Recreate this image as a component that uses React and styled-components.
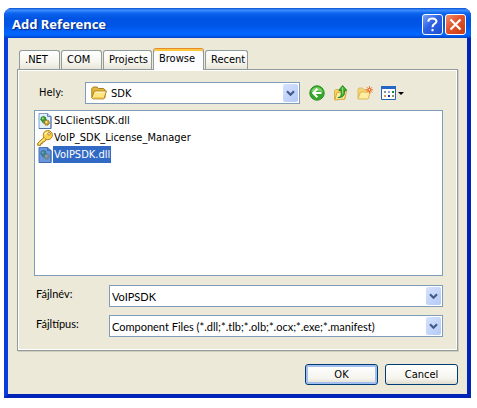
import React, { useState } from "react";
import styled, { createGlobalStyle } from "styled-components";

const tabs = [
  { name: ".NET", width: 41 },
  { name: "COM", width: 41 },
  { name: "Projects", width: 49 },
  { name: "Browse", width: 51 },
  { name: "Recent", width: 43 },
];

const files = [
  { name: "SLClientSDK.dll", type: "dll" },
  { name: "VoIP_SDK_License_Manager", type: "key" },
  { name: "VoIPSDK.dll", type: "dll" },
];

const FolderIcon = () => (
  <svg width="16" height="14" viewBox="0 0 16 14">
    <path d="M.8 11.5V2.5L2.3 1H6l1.5 1.5h5.2L14 4v7.5z" fill="#e3b53a" stroke="#a97f1d" />
    <path d="M2 12.9L.9 11.5 3.4 5h12L13 12.9z" fill="#ffe583" stroke="#b0861f" />
    <path d="M4.5 6.2h9.3" stroke="#fffbd8" />
    <path d="M2.8 11.8h9.6" stroke="#eec041" />
  </svg>
);

const DllIcon = ({ selected }) => (
  <svg width="14" height="16" viewBox="0 0 14 16">
    <path d="M1 .5h8.5l3.5 3v12H1z" fill={selected ? "#6a97db" : "#e3effc"} stroke={selected ? "#4676bd" : "#7f9fc8"} />
    <path d="M13 3.5v12H1" fill="none" stroke={selected ? "#3c69ad" : "#4f729f"} />
    <path d="M9.5.5v3H13" fill={selected ? "#4f7fc9" : "#b8d0ee"} stroke={selected ? "#3d6cb4" : "#5f86bb"} />
    <circle cx="5.4" cy="6" r="2.6" fill={selected ? "#3b8291" : "#35a035"} stroke={selected ? "#34688f" : "#1d6f2b"} strokeDasharray="1.6 .6" />
    <circle cx="4.8" cy="5.4" r="1" fill={selected ? "#75a7b5" : "#a4df8c"} />
    <circle cx="8.7" cy="9.6" r="2.6" fill={selected ? "#788e94" : "#d0a531"} stroke={selected ? "#5c7a98" : "#80641c"} strokeDasharray="1.6 .6" />
    <circle cx="8.3" cy="9.1" r="1" fill={selected ? "#9aa9a5" : "#fff0a8"} />
    <path d="M6.5 9.8q-1.5.8-2-1" fill="none" stroke={selected ? "#346d84" : "#277f2f"} />
  </svg>
);

const KeyIcon = () => (
  <svg width="16" height="16" viewBox="0 0 16 16">
    <path d="M7.3 7L.7 13.1v2.3h2.9v-1.6h1.6v-1.7h1.7L9.8 9.5z" fill="#f8cf45" stroke="#a07015" strokeWidth=".9" />
    <circle cx="10.8" cy="5.1" r="4.6" fill="#fad34c" stroke="#a8781c" strokeWidth=".9" />
    <path d="M7.8 4.8a3.2 3.2 0 0 1 3-2.4" fill="none" stroke="#fff6bb" strokeWidth="1.2" />
    <circle cx="12.1" cy="3.8" r="1.3" fill="#fff" stroke="#a07015" strokeWidth=".8" />
    <path d="M1.8 13.8l6-5.4" stroke="#fff2a0" />
  </svg>
);

const BackIcon = () => (
  <svg width="16" height="16" viewBox="0 0 16 16">
    <circle cx="8" cy="8" r="7.2" fill="#35a82c" stroke="#2b8c26" />
    <path d="M2.2 7a5.9 5.9 0 0 1 11.6 0q-5.8-2-11.6 0" fill="#7ccf66" />
    <path d="M8.4 3.8L4.2 8l4.2 4.2M4.8 8h7.7" fill="none" stroke="#fff" strokeWidth="2" />
  </svg>
);

const UpIcon = () => (
  <svg width="16" height="16" viewBox="0 0 16 16">
    <path d="M1.5 14V5.5l1-1h3l1 1H12V14z" fill="#f3d469" stroke="#d9b04a" />
    <path d="M1.8 15L4 7.5 13.5 6.5 11.5 14z" fill="#ffed9c" stroke="#d4a83c" />
    <path d="M4.8 12.6q3.8-.5 3.4-4.1V5.3H5.8L9.6.6l4.2 4.7h-2.4v3.4q-.6 4-6.6 3.9z" fill="#42b637" stroke="#1d7b20" strokeWidth=".9" />
    <path d="M9.6 2.3v6.2" stroke="#94de73" />
  </svg>
);

const NewFolderIcon = () => (
  <svg width="16" height="14" viewBox="0 0 16 14">
    <path d="M1 12.5V3l1-1h3.5l1 1.5H11V12.5z" fill="#f3d577" stroke="#e0b95e" />
    <path d="M1 13L3.5 6H13.5L11 13z" fill="#ffeda2" stroke="#dfb957" />
    <path d="M12.5 0v7.6M8.7 3.8h7.3M9.9 1.2l5.2 5.2M15.1 1.2L9.9 6.4" stroke="#f0743a" />
    <circle cx="12.5" cy="3.8" r="1.4" fill="#fff0bd" stroke="#ed541e" />
  </svg>
);

const ViewIcon = () => (
  <svg width="23" height="14" viewBox="0 0 23 14">
    <path d="M.5.5h14v13H.5z" fill="#fff" stroke="#2864b5" />
    <path d="M0 0h15v3H0z" fill="#2467c6" />
    <path d="M3 5h2v2H3z" fill="#8793a8" />
    <path d="M7 5h2v2H7z" fill="#8c9fd1" />
    <path d="M11 5h2v2h-2z" fill="#268438" />
    <path d="M3 9h2v2H3z" fill="#d79169" />
    <path d="M7 9h2v2H7z" fill="#173aa0" />
    <path d="M11 9h2v2h-2z" fill="#9a8968" />
    <path d="M17 6h6l-3 3z" fill="#000" />
  </svg>
);

const Combo = ({ icon, children }) => (
  <ComboBox>
    {icon && <ComboIcon>{icon}</ComboIcon>}
    {children}
    <ComboArrow>
      <svg width="9" height="7" viewBox="0 0 9 7">
        <path d="M1 1.2l3.5 3.5L8 1.2" fill="none" stroke="#425b8c" strokeWidth="2.2" />
      </svg>
    </ComboArrow>
  </ComboBox>
);

const App = () => {
  const [tab, setTab] = useState("Browse");
  const [selected, setSelected] = useState("VoIPSDK.dll");
  const [fileName, setFileName] = useState("VoIPSDK");

  return (
    <>
      <GlobalStyle />
      <Dialog role="dialog" aria-labelledby="title">
        <TitleBar>
          <Title id="title">Add Reference</Title>
          <TitleButton type="button" aria-label="Help">
            <svg width="13" height="15" viewBox="0 0 13 15">
              <path d="M2.5 4.7V3.5Q3 1.5 6.5 1.5T10.5 4.2Q10.5 6 8.2 7.2Q6.5 8.2 6.5 10.2M6.5 12v2.2" fill="none" stroke="#fff" strokeWidth="2" />
            </svg>
          </TitleButton>
          <TitleButton type="button" aria-label="Close" $close>
            <svg width="13" height="13" viewBox="0 0 13 13">
              <path d="M1.5 1.5l10 10M11.5 1.5l-10 10" stroke="#fff" strokeWidth="2.2" />
            </svg>
          </TitleButton>
        </TitleBar>
        <Content>
          <Tabs role="tablist">
            {tabs.map((t) => (
              <Tab
                key={t.name}
                type="button"
                role="tab"
                aria-selected={tab === t.name}
                $active={tab === t.name}
                $width={t.width}
                onClick={() => setTab(t.name)}
              >
                {t.name}
              </Tab>
            ))}
          </Tabs>
          <Panel role="tabpanel">
            <LookIn>
              <Label htmlFor="folder">Hely:</Label>
              <Combo icon={<FolderIcon />}>
                <Select id="folder" $icon>
                  <option>SDK</option>
                </Select>
              </Combo>
              <Tools>
                <ToolButton type="button" aria-label="Back"><BackIcon /></ToolButton>
                <ToolButton type="button" aria-label="Up one level"><UpIcon /></ToolButton>
                <ToolButton type="button" aria-label="New folder"><NewFolderIcon /></ToolButton>
                <ToolButton type="button" aria-label="Views"><ViewIcon /></ToolButton>
              </Tools>
            </LookIn>
            <FileList>
              {files.map((f) => (
                <FileRow key={f.name} type="button" onClick={() => setSelected(f.name)}>
                  <FileIcon>
                    {f.type === "key" ? <KeyIcon /> : <DllIcon selected={selected === f.name} />}
                  </FileIcon>
                  <FileName $selected={selected === f.name}>{f.name}</FileName>
                </FileRow>
              ))}
            </FileList>
            <Fields>
              <Label htmlFor="filename">Fájlnév:</Label>
              <Combo>
                <Input id="filename" value={fileName} onChange={(e) => setFileName(e.target.value)} />
              </Combo>
              <Label htmlFor="filetype">Fájltípus:</Label>
              <Combo>
                <Select id="filetype">
                  <option>Component Files (*.dll;*.tlb;*.olb;*.ocx;*.exe;*.manifest)</option>
                </Select>
              </Combo>
            </Fields>
          </Panel>
          <Buttons>
            <Button type="button" $primary>OK</Button>
            <Button type="button">Cancel</Button>
          </Buttons>
        </Content>
      </Dialog>
    </>
  );
};
export default App;

const GlobalStyle = createGlobalStyle`
  * {
    box-sizing: border-box;
  }
  body {
    margin: 0;
    background-color: #ffffff;
  }
  body, button, input, select {
    font-family: "DejaVu Sans Condensed", "DejaVu Sans", sans-serif;
    font-size: 11px;
    color: #000000;
  }
  svg {
    display: block;
    flex: none;
  }
`;
const Dialog = styled.div`
  margin: 8px 6px 10px 4px;
  border: 4px solid #0a3fd6;
  border-color: #1250e6 #0024b8 #0024b8 #0b3ddb;
  border-top: 0;
  border-radius: 8px 8px 0 0;
  background-color: #0b4fe2;
`;
const TitleBar = styled.div`
  display: flex;
  align-items: center;
  gap: 2px;
  height: 30px;
  margin: 0 -4px;
  padding: 2px 5px 0 8px;
  border-radius: 8px 8px 0 0;
  background: linear-gradient(
    #0a50d0 0%,
    #3c90ff 7%,
    #0d62ee 18%,
    #0054e3 35%,
    #0056e8 60%,
    #0366ff 85%,
    #0260f5 92%,
    #003fc4 100%
  );
`;
const Title = styled.div`
  flex: 1;
  color: #ffffff;
  font-family: "Noto Sans", "Open Sans", sans-serif;
  font-size: 13px;
  font-weight: bold;
  text-shadow: 1px 1px 1px #0a2a80;
`;
const TitleButton = styled.button`
  display: flex;
  align-items: center;
  justify-content: center;
  width: 21px;
  height: 21px;
  padding: 0;
  border: 1px solid #ffffff;
  border-radius: 3px;
  background: ${(p) =>
    p.$close
      ? "linear-gradient(135deg, #f0906c, #e2532c 45%, #c83c12)"
      : "linear-gradient(135deg, #7ba4f4, #2e62e4 45%, #1d4fd0)"};
`;
const Content = styled.div`
  padding: 10px 9px 9px;
  background-color: #ece9d8;
`;
const Tabs = styled.div`
  display: flex;
  align-items: flex-end;
  gap: 1px;
  height: 21px;
  padding-left: 2px;
`;
const Tab = styled.button`
  position: relative;
  width: ${(p) => p.$width}px;
  height: ${(p) => (p.$active ? 22 : 19)}px;
  margin-bottom: ${(p) => (p.$active ? -1 : 0)}px;
  padding: 0 0 ${(p) => (p.$active ? 2 : 0)}px 5px;
  border: 1px solid #919b9c;
  border-top-color: ${(p) => (p.$active ? "#e68b2c" : "#919b9c")};
  border-bottom: 0;
  border-radius: 3px 3px 0 0;
  background: ${(p) => (p.$active ? "#fcfcfe" : "linear-gradient(#ffffff, #f6f5ee 60%, #e8e6da)")};
  box-shadow: ${(p) => (p.$active ? "inset 0 2px 0 #ffc73c" : "none")};
  line-height: 16px;
  text-align: left;
  white-space: nowrap;
`;
const Panel = styled.div`
  padding: 12px 14px 13px 16px;
  border: 1px solid #919b9c;
  box-shadow: inset 0 0 0 1px #ffffff, 1px 1px 0 #d0cebf;
`;
const LookIn = styled.div`
  display: grid;
  grid-template-columns: 46px 1fr auto;
  align-items: center;
  padding-left: 5px;
`;
const Label = styled.label`
  line-height: 18px;
`;
const ComboBox = styled.div`
  position: relative;
  height: 22px;
  border: 1px solid #7f9db9;
  background-color: #ffffff;
`;
const ComboIcon = styled.span`
  position: absolute;
  left: 5px;
  top: 3px;
  pointer-events: none;
`;
const ComboArrow = styled.span`
  position: absolute;
  top: 1px;
  right: 1px;
  bottom: 1px;
  display: flex;
  align-items: center;
  justify-content: center;
  width: 15px;
  border-radius: 2px;
  background: linear-gradient(135deg, #d6e2fd, #b4c9f8);
  pointer-events: none;
`;
const Select = styled.select`
  display: block;
  width: 100%;
  height: 20px;
  padding: 0 18px 0 ${(p) => (p.$icon ? 25 : 2)}px;
  border: 0;
  outline: 0;
  appearance: none;
  background: transparent;
`;
const Input = styled.input`
  display: block;
  width: 100%;
  height: 20px;
  padding: 0 18px 0 2px;
  border: 0;
  outline: 0;
  background: transparent;
`;
const Tools = styled.div`
  display: flex;
  align-items: center;
  gap: 8px;
  padding: 0 39px 0 9px;
`;
const ToolButton = styled.button`
  padding: 0;
  border: 0;
  background: transparent;
`;
const FileList = styled.div`
  display: flex;
  flex-direction: column;
  height: 166px;
  margin: 6px 0 9px;
  padding: 1px 2px;
  border: 1px solid #7f9db9;
  background-color: #ffffff;
`;
const FileRow = styled.button`
  display: flex;
  align-items: center;
  height: 17px;
  padding: 0;
  border: 0;
  background: transparent;
`;
const FileIcon = styled.span`
  display: flex;
  justify-content: center;
  width: 16px;
`;
const FileName = styled.span`
  padding: 0 1px;
  line-height: 17px;
  color: ${(p) => (p.$selected ? "#ffffff" : "#000000")};
  background-color: ${(p) => (p.$selected ? "#316ac5" : "transparent")};
`;
const Fields = styled.div`
  display: grid;
  grid-template-columns: 73px 1fr;
  row-gap: 8px;
  padding-left: 2px;

  label, input, select {
    font-family: Lato, "Liberation Sans", sans-serif;
  }
`;
const Buttons = styled.div`
  display: flex;
  justify-content: flex-end;
  gap: 7px;
  margin-top: 13px;
`;
const Button = styled.button`
  width: 73px;
  height: 21px;
  padding: 0;
  border: 1px solid #003c74;
  border-radius: 3px;
  background: linear-gradient(#ffffff, #f5f4ee 70%, #dfdccf);
  box-shadow: ${(p) => (p.$primary ? "inset 0 0 0 2px #a3bff0" : "none")};
`;
